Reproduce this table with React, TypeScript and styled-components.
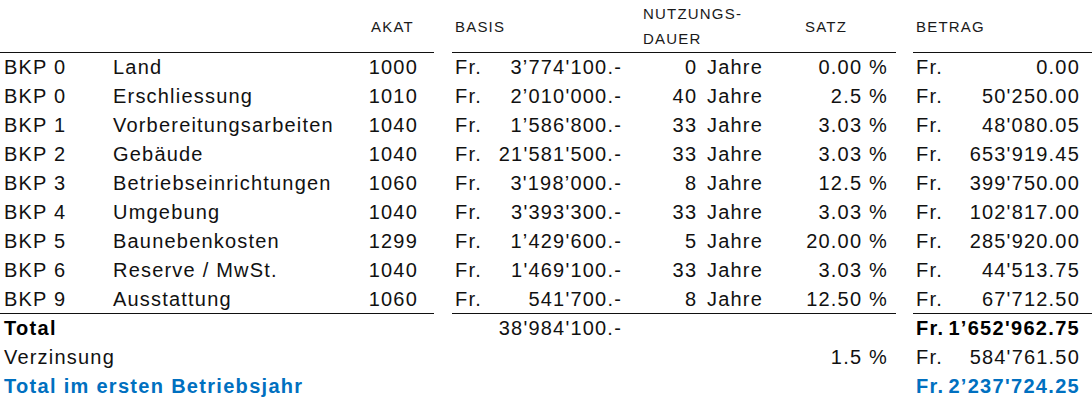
import React from "react";
import styled, { createGlobalStyle, css } from "styled-components";

const Global = createGlobalStyle`
  html, body { margin: 0; padding: 0; background: #ffffff; }
  body { font-family: "Liberation Sans", Arial, sans-serif; color: #111111; }
`;

const Table = styled.div`
  display: grid;
  width: 1092px;
  grid-template-columns: 109px 251px 74px 18px 38px 132px 141px 133px 17px 38px 141px;
  grid-auto-rows: 29px;
  grid-template-rows: 53px;
`;

type Align = "left" | "right";

const Head = styled.div<{ $align?: Align; $line?: boolean; $pad?: number }>`
  display: flex;
  align-items: center;
  justify-content: ${(p) => (p.$align === "right" ? "flex-end" : "flex-start")};
  font-size: 15px;
  line-height: 25px;
  letter-spacing: 1.2px;
  color: #1a1a1a;
  padding-left: ${(p) => p.$pad ?? 0}px;
  ${(p) => p.$line && css`border-bottom: 1px solid #111;`}
`;

type Tone = "normal" | "bold" | "blue";

const Cell = styled.div<{
  $align?: Align;
  $line?: boolean;
  $pad?: number;
  $padR?: number;
  $tone?: Tone;
  $ws?: number;
}>`
  display: flex;
  align-items: center;
  justify-content: ${(p) => (p.$align === "right" ? "flex-end" : "flex-start")};
  font-size: 20px;
  line-height: 29px;
  letter-spacing: 1.2px;
  word-spacing: ${(p) => p.$ws ?? 0}px;
  white-space: pre;
  padding-left: ${(p) => p.$pad ?? 0}px;
  padding-right: ${(p) => p.$padR ?? 0}px;
  box-sizing: border-box;
  ${(p) => p.$line && css`border-bottom: 1px solid #111;`}
  ${(p) => p.$tone === "bold" && css`font-weight: 700; color: #000; letter-spacing: 1.3px;`}
  ${(p) => p.$tone === "blue" && css`font-weight: 700; color: #0070c0; letter-spacing: 1.3px;`}
`;

const Gap = styled.div``;

type Row = {
  bkp: string;
  name: string;
  akat: string;
  basis: string;
  dauer: string;
  satz: string;
  betrag: string;
};

const rows: Row[] = [
  { bkp: "BKP 0", name: "Land", akat: "1000", basis: "3’774'100.-", dauer: "0 Jahre", satz: "0.00 %", betrag: "0.00" },
  { bkp: "BKP 0", name: "Erschliessung", akat: "1010", basis: "2’010'000.-", dauer: "40 Jahre", satz: "2.5 %", betrag: "50'250.00" },
  { bkp: "BKP 1", name: "Vorbereitungsarbeiten", akat: "1040", basis: "1’586'800.-", dauer: "33 Jahre", satz: "3.03 %", betrag: "48'080.05" },
  { bkp: "BKP 2", name: "Gebäude", akat: "1040", basis: "21'581'500.-", dauer: "33 Jahre", satz: "3.03 %", betrag: "653'919.45" },
  { bkp: "BKP 3", name: "Betriebseinrichtungen", akat: "1060", basis: "3'198’000.-", dauer: "8 Jahre", satz: "12.5 %", betrag: "399'750.00" },
  { bkp: "BKP 4", name: "Umgebung", akat: "1040", basis: "3'393'300.-", dauer: "33 Jahre", satz: "3.03 %", betrag: "102'817.00" },
  { bkp: "BKP 5", name: "Baunebenkosten", akat: "1299", basis: "1’429'600.-", dauer: "5 Jahre", satz: "20.00 %", betrag: "285'920.00" },
  { bkp: "BKP 6", name: "Reserve / MwSt.", akat: "1040", basis: "1'469'100.-", dauer: "33 Jahre", satz: "3.03 %", betrag: "44'513.75" },
  { bkp: "BKP 9", name: "Ausstattung", akat: "1060", basis: "541'700.-", dauer: "8 Jahre", satz: "12.50 %", betrag: "67'712.50" },
];

export default function App() {
  return (
    <>
      <Global />
      <Table>
        <Head $line />
        <Head $line />
        <Head $line $pad={11}>AKAT</Head>
        <Gap />
        <Head $line $pad={3}>BASIS</Head>
        <Head $line />
        <Head $line $pad={21}>NUTZUNGS-<br />DAUER</Head>
        <Head $line $pad={42}>SATZ</Head>
        <Gap />
        <Head $line $pad={3}>BETRAG</Head>
        <Head $line />

        {rows.map((r, i) => {
          const last = i === rows.length - 1;
          return (
            <React.Fragment key={i}>
              <Cell $line={last} $pad={4}>{r.bkp}</Cell>
              <Cell $line={last} $pad={4}>{r.name}</Cell>
              <Cell $line={last} $align="right" $padR={16}>{r.akat}</Cell>
              <Gap />
              <Cell $line={last} $pad={3}>Fr.</Cell>
              <Cell $line={last} $align="right">{r.basis}</Cell>
              <Cell $line={last} $align="right" $ws={3}>{r.dauer}</Cell>
              <Cell $line={last} $align="right" $padR={8}>{r.satz}</Cell>
              <Gap />
              <Cell $line={last} $pad={3}>Fr.</Cell>
              <Cell $line={last} $align="right" $padR={12}>{r.betrag}</Cell>
            </React.Fragment>
          );
        })}

        <Cell $tone="bold" $pad={4}>Total</Cell>
        <Cell />
        <Cell />
        <Gap />
        <Cell />
        <Cell $align="right">38'984'100.-</Cell>
        <Cell />
        <Cell />
        <Gap />
        <Cell $tone="bold" $pad={3}>Fr.</Cell>
        <Cell $tone="bold" $align="right" $padR={12}>1’652'962.75</Cell>

        <Cell $pad={4}>Verzinsung</Cell>
        <Cell />
        <Cell />
        <Gap />
        <Cell />
        <Cell />
        <Cell />
        <Cell $align="right" $padR={8}>1.5 %</Cell>
        <Gap />
        <Cell $pad={3}>Fr.</Cell>
        <Cell $align="right" $padR={12}>584'761.50</Cell>

        <Cell $tone="blue" $pad={4}>Total im ersten Betriebsjahr</Cell>
        <Cell />
        <Cell />
        <Gap />
        <Cell />
        <Cell />
        <Cell />
        <Cell />
        <Gap />
        <Cell $tone="blue" $pad={3}>Fr.</Cell>
        <Cell $tone="blue" $align="right" $padR={12}>2’237'724.25</Cell>
      </Table>
    </>
  );
}
